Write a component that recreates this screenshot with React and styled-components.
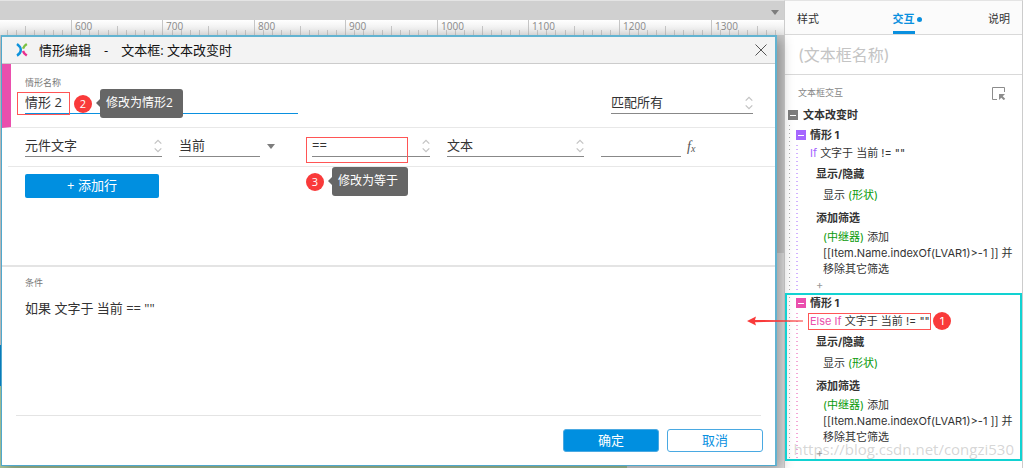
import styled, { createGlobalStyle, css } from 'styled-components';
import { useState } from 'react';

const RULER_START = 600;
const RULER_X = 71;
const RULER_STEP = 91.4;

const Ruler = () => {
    const ticks = [];
    for (let i = -8; i < 220; i++) {
        const x = Math.round(RULER_X + (i * RULER_STEP) / 10);
        if (x < 0) continue;
        const top = i % 10 === 0 ? 0 : i % 5 === 0 ? 6 : 10;
        ticks.push(<rect key={i} x={x} y={top} width="1" height={15 - top} fill="#c6c6c6" />);
    }
    const labels = [];
    for (let i = 0; i < 20; i++) {
        labels.push(
            <text key={i} x={Math.round(RULER_X + i * RULER_STEP) + 4} y="10">{RULER_START + i * 100}</text>
        );
    }
    return <RulerSvg aria-hidden="true">{ticks}{labels}</RulerSvg>;
}

const Logo = () => (
    <svg width="12" height="14" viewBox="0 0 12 14" fill="none" strokeWidth="2.4">
        <path d="M1 1 C3 2.5 4.8 4.8 4.8 7 C4.8 9.2 3.2 11.3 1 12.6" stroke="#0d93dd" />
        <path d="M10.8 1 C9 2.2 7.6 3.8 7 5.6" stroke="#7cc142" />
        <path d="M7 8 C7.6 9.8 9 11.4 10.8 12.6" stroke="#e8308f" />
    </svg>
)

const Updown = () => (
    <Chevrons width="8" height="14" viewBox="0 0 8 14" fill="none" stroke="#c4c4c4" strokeWidth="1.3">
        <path d="M0.7 4.6 L4 1.3 L7.3 4.6 M0.7 9.4 L4 12.7 L7.3 9.4" />
    </Chevrons>
)

const Picker = ({ label, value, width, children }) => (
    <Field $width={width}>
        <Select aria-label={label} defaultValue={value}>
            <option>{value}</option>
        </Select>
        <Updown />
        {children}
    </Field>
)

const CaseItem = ({ color, keyword, selected, children }) => {
    const [open, setOpen] = useState(true);

    return (
        <Case $selected={selected} $color={color}>
            <CaseHead>
                <Toggle $color={color} aria-label="情形 1" onClick={() => setOpen(!open)} />
                情形 1
            </CaseHead>
            {open && <>
                <Condition>
                    <Keyword $color={color}>{keyword}</Keyword> 文字于 当前 != ""
                    {children}
                </Condition>
                <ActionTitle>显示/隐藏</ActionTitle>
                <Action $single>显示 <Target>(形状)</Target></Action>
                <ActionTitle>添加筛选</ActionTitle>
                <Action><Target>(中继器)</Target> 添加 [[Item.Name.indexOf(LVAR1)&gt;-1 ]] 并移除其它筛选</Action>
                <AddAction aria-label="添加动作">+</AddAction>
            </>}
        </Case>
    );
}

const App = () => {
    const [name, setName] = useState('情形 2');

    return (
        <Page>
            <GlobalStyle />
            <Workspace>
                <TabStrip><Caret /></TabStrip>
                <Ruler />
                <Canvas>
                    <Dialog role="dialog" aria-label="情形编辑">
                        <TitleBar>
                            <Logo />
                            <Title>情形编辑<span>-</span>文本框: 文本改变时</Title>
                            <Close aria-label="关闭">
                                <svg width="12" height="12" viewBox="0 0 12 12" stroke="#555" strokeWidth="1">
                                    <path d="M0.5 0.5 L11.5 11.5 M11.5 0.5 L0.5 11.5" />
                                </svg>
                            </Close>
                        </TitleBar>
                        <CaseInfo>
                            <NameBlock>
                                <Label htmlFor="case-name">情形名称</Label>
                                <Field $active>
                                    <Input id="case-name" value={name} onChange={(e) => setName(e.target.value)} />
                                    <NameNote>
                                        <Frame $width={53} $height={23} />
                                        <Badge>2</Badge>
                                        <Tip>修改为情形2</Tip>
                                    </NameNote>
                                </Field>
                            </NameBlock>
                            <Picker label="匹配" value="匹配所有" width={142} />
                        </CaseInfo>
                        <Expression>
                            <Picker label="类型" value="元件文字" width={137} />
                            <WidgetPicker>
                                <Field $width={81}>
                                    <Input aria-label="元件" defaultValue="当前" />
                                </Field>
                                <Caret />
                            </WidgetPicker>
                            <Picker label="运算" value="==" width={118}>
                                <OperatorNote>
                                    <Frame $width={102} $height={26} />
                                    <NoteRow>
                                        <Badge>3</Badge>
                                        <Tip>修改为等于</Tip>
                                    </NoteRow>
                                </OperatorNote>
                            </Picker>
                            <Picker label="值类型" value="文本" width={137} />
                            <ValueGroup>
                                <Field $width={80}>
                                    <Input aria-label="值" />
                                </Field>
                                <Fx aria-label="函数">f<sub>x</sub></Fx>
                            </ValueGroup>
                        </Expression>
                        <Rows>
                            <AddRow>+ 添加行</AddRow>
                        </Rows>
                        <Summary>
                            <Label as="h2">条件</Label>
                            <p>如果 文字于 当前 == ""</p>
                        </Summary>
                        <Footer>
                            <Button $primary>确定</Button>
                            <Button>取消</Button>
                        </Footer>
                    </Dialog>
                </Canvas>
            </Workspace>
            <Inspector>
                <Tabs>
                    <Tab>样式</Tab>
                    <Tab $active>交互</Tab>
                    <Tab>说明</Tab>
                </Tabs>
                <WidgetName aria-label="名称" placeholder="(文本框名称)" />
                <SectionHead>
                    文本框交互
                    <svg width="14" height="13" viewBox="0 0 14 13" fill="none" stroke="#8c8c8c">
                        <path d="M5 12.5 H0.5 V0.5 H12.5 V5" />
                        <path d="M12.5 12.5 L8.5 8.5" strokeWidth="2" />
                        <path d="M7 7 H13 L7 13 Z" fill="#8c8c8c" stroke="none" />
                    </svg>
                </SectionHead>
                <EventHead>
                    <Toggle $color="#7d7d7d" aria-label="文本改变时" />
                    文本改变时
                </EventHead>
                <Tree>
                    <CaseItem color="#a566ff" keyword="If" />
                    <CaseItem color="#ea4fad" keyword="Else If" selected>
                        <ConditionNote>
                            <Arrow width="56" height="10" viewBox="0 0 56 10" fill="#f93a3a">
                                <path d="M0 5 L9 0.5 L8 4 L56 4.5 V5.5 L8 6.2 L9 9.5 Z" />
                            </Arrow>
                            <Frame $width={123} $height={17} />
                            <Badge>1</Badge>
                        </ConditionNote>
                    </CaseItem>
                    <Watermark>https://blog.csdn.net/congzi530</Watermark>
                </Tree>
            </Inspector>
        </Page>
    );
}

export default App;

const GlobalStyle = createGlobalStyle`
* {
    box-sizing: border-box;
}
body {
    margin: 0;
    background: white;
    color: #333;
    font-family: "Open Sans", "Noto Sans CJK SC", sans-serif;
    font-size: 13px;
    line-height: 18px;
}
button, input, select {
    margin: 0;
    padding: 0;
    border: 0;
    border-radius: 0;
    background: none;
    color: inherit;
    font: inherit;
    outline: none;
}
button {
    cursor: pointer;
}
h1, h2, p {
    margin: 0;
    font-weight: normal;
}
`;

const Page = styled.div`
display: flex;
min-height: 100vh;
`;

const Workspace = styled.div`
flex: 1;
display: flex;
flex-direction: column;
min-width: 0;
`;

const TabStrip = styled.div`
height: 20px;
padding: 3px 5px 0 0;
border-top: 1px solid #e4e4e4;
background: #d0d0d0;
display: flex;
align-items: center;
justify-content: flex-end;
`;

const Caret = styled.i`
border: 4px solid transparent;
border-top: 5px solid #7d7d7d;
border-bottom: 0;
`;

const RulerSvg = styled.svg`
display: block;
width: 100%;
height: 15px;
background: linear-gradient(white, #e6e6e6);
font-family: "Open Sans", sans-serif;
font-size: 10px;
fill: #8a8a8a;
`;

const Canvas = styled.div`
flex: 1;
display: flex;
padding: 0 7px 2px 1px;
background:
    linear-gradient(#c9c9c9, #c9c9c9) right top / 7px 218px no-repeat,
    linear-gradient(#dedede, #dedede) right top / 7px 100% no-repeat,
    linear-gradient(#a9c69a, #a9c69a) left bottom / 80% 2px no-repeat,
    linear-gradient(#c4c4c4 0 310px, #0a84c8 310px 351px, #a9c69a 351px) left top / 2px 100% no-repeat,
    #ddd;
`;

const Dialog = styled.section`
position: relative;
flex: 1;
display: flex;
flex-direction: column;
border: 1px solid #4fa8cd;
border-top: 2px solid #62b3d1;
border-right: 2px solid #62b3d1;
background: white;
box-shadow: 4px 4px 12px rgba(0, 0, 0, 0.3);
`;

const TitleBar = styled.header`
height: 27px;
padding: 0 8px 0 14px;
display: flex;
align-items: center;
border-bottom: 1px solid #ccc;
background: #f3f3f3;
`;

const Title = styled.h1`
flex: 1;
margin-left: 11px;
color: #111;
font-size: 13px;
line-height: 20px;

span {
    margin: 0 13px;
}
`;

const Close = styled.button`
display: flex;
`;

const CaseInfo = styled.div`
height: 64px;
padding: 12px 22px 13px 14px;
display: flex;
align-items: flex-end;
justify-content: space-between;
border-left: 9px solid #ea4fad;
border-bottom: 1px solid #e8e8e8;
`;

const NameBlock = styled.div`
flex: 0 1 273px;
`;

const Label = styled.label`
display: block;
color: #777;
font-size: 9px;
line-height: 14px;
`;

const Field = styled.div`
position: relative;
display: flex;
flex: none;
width: ${({ $width }) => ($width ? `${$width}px` : '100%')};
height: 21px;
border-bottom: 1px solid ${({ $active }) => ($active ? '#0a90df' : '#888')};

${NameBlock} & {
    margin-top: 3px;
}
`;

const Input = styled.input`
width: 100%;
height: 18px;
`;

const Select = styled.select`
width: 100%;
height: 18px;
appearance: none;
`;

const Chevrons = styled.svg`
position: absolute;
top: 3px;
right: 0;
pointer-events: none;
`;

const Expression = styled.div`
height: 39px;
margin-left: 6px;
padding: 8px 0 0 17px;
display: flex;
align-items: flex-start;
gap: 17px;
border-bottom: 1px solid #e8e8e8;
`;

const WidgetPicker = styled.div`
width: 116px;
display: flex;
align-items: center;
gap: 7px;
`;

const ValueGroup = styled.div`
display: flex;
gap: 6px;
`;

const Fx = styled.button`
height: 21px;
color: #555;
font-family: "Liberation Serif", serif;
font-size: 14px;
font-style: italic;
line-height: 20px;

sub {
    font-size: 10px;
    line-height: 1px;
    vertical-align: -1px;
}
`;

const Rows = styled.div`
min-height: 100px;
padding: 7px 23px;
border-bottom: 2px solid #e4e4e4;
`;

const AddRow = styled.button`
width: 134px;
height: 24px;
padding-bottom: 2px;
border-radius: 2px;
background: #008fe0;
color: white;
`;

const Summary = styled.div`
flex: 1;
min-height: 148px;
margin: 0 14px;
padding: 9px;
border-bottom: 1px solid #e4e4e4;

p {
    margin-top: 8px;
    line-height: 20px;
}
`;

const Footer = styled.footer`
padding: 13px 12px;
display: flex;
justify-content: flex-end;
gap: 8px;
`;

const Button = styled.button`
width: 96px;
height: 23px;
padding-bottom: 2px;
border: 1px solid #4aa9e2;
border-radius: 3px;
background: white;
color: #0a90df;

${({ $primary }) => $primary && css`
    background: #008fe0;
    color: white;
`}
`;

const Frame = styled.div`
flex: none;
width: ${({ $width }) => $width}px;
height: ${({ $height }) => $height}px;
border: 1px solid #f55;
`;

const Badge = styled.span`
flex: none;
width: 18px;
height: 18px;
border-radius: 50%;
background: #f93a3a;
color: white;
font-size: 11px;
line-height: 18px;
text-align: center;
`;

const Tip = styled.span`
position: relative;
height: 29px;
margin-left: 4px;
padding: 0 10px 0 6px;
border-radius: 3px;
background: #666;
color: white;
font-size: 12px;
line-height: 28px;
white-space: nowrap;

&::before {
    content: "";
    position: absolute;
    top: 10px;
    right: 100%;
    border: 4px solid transparent;
    border-right-color: #666;
    border-left: 0;
}
`;

const Note = styled.div`
position: absolute;
z-index: 1;
display: flex;
align-items: center;
gap: 4px;
pointer-events: none;
`;

const NameNote = styled(Note)`
top: -4px;
left: -8px;
`;

const OperatorNote = styled(Note)`
top: 1px;
left: -6px;
flex-direction: column;
align-items: flex-start;
`;

const NoteRow = styled.div`
display: flex;
align-items: center;
gap: 4px;
`;

const Inspector = styled.aside`
flex: none;
width: 239px;
border: 1px solid #ccc;
border-top-color: #e4e4e4;
border-bottom: 0;
font-family: Inter, "Noto Sans CJK SC", sans-serif;
font-size: 11px;
`;

const Tabs = styled.nav`
height: 34px;
padding: 0 12px;
display: flex;
justify-content: space-between;
border-bottom: 1px solid #d9d9d9;
background: #fbfbfb;
`;

const Tab = styled.button`
position: relative;
padding-top: 5px;
border-bottom: 3px solid transparent;

${({ $active }) => $active && css`
    border-color: #0a90df;
    color: #0a90df;
    font-weight: bold;

    &::after {
        content: "";
        position: absolute;
        top: 16px;
        left: 24px;
        width: 5px;
        height: 5px;
        border-radius: 50%;
        background: #0a90df;
    }
`}
`;

const WidgetName = styled.input`
display: block;
width: 100%;
height: 40px;
padding: 0 13px;
border-bottom: 1px solid #d9d9d9;
font-size: 16px;
line-height: 24px;

&::placeholder {
    color: #c4c4c4;
}
`;

const SectionHead = styled.div`
height: 30px;
padding: 6px 16px 0 13px;
display: flex;
align-items: center;
justify-content: space-between;
color: #888;
font-size: 9px;
`;

const EventHead = styled.div`
height: 20px;
padding-left: 3px;
display: flex;
align-items: center;
gap: 5px;
font-weight: bold;
`;

const Toggle = styled.button`
width: 10px;
height: 10px;
background: linear-gradient(white, white) center / 6px 1px no-repeat ${({ $color }) => $color};
`;

const Tree = styled.div`
position: relative;
background: repeating-linear-gradient(#aaa 0 1px, transparent 1px 4px) 4px 0 / 1px 100% no-repeat;
`;

const Case = styled.div`
padding-left: 23px;
border: 2px solid ${({ $selected }) => ($selected ? '#12d2d2' : 'transparent')};
background: repeating-linear-gradient(${({ $color }) => $color}80 0 1px, transparent 1px 4px) 9px 18px / 2px 100% no-repeat;
`;

const CaseHead = styled.div`
height: 16px;
margin-left: -14px;
display: flex;
align-items: center;
gap: 4px;
font-weight: bold;
`;

const Condition = styled.div`
position: relative;
line-height: 20px;
`;

const ConditionNote = styled(Note)`
top: 1px;
left: -63px;

${Frame} {
    margin-left: 1px;
    margin-right: -2px;
}
`;

const Arrow = styled.svg`
flex: none;
`;

const Keyword = styled.span`
color: ${({ $color }) => $color};
`;

const ActionTitle = styled.div`
padding-left: 6px;
font-weight: bold;
line-height: 22px;
`;

const Action = styled.div`
margin-bottom: 2px;
padding: 0 2px 0 13px;
line-height: ${({ $single }) => ($single ? 20 : 16)}px;
`;

const Target = styled.span`
color: #0a9a0a;
`;

const AddAction = styled.button`
display: block;
height: 12px;
margin-left: 6px;
color: #999;
line-height: 12px;
`;

const Watermark = styled.div`
position: absolute;
right: 8px;
bottom: 2px;
color: rgba(150, 150, 150, 0.4);
font-family: "Open Sans", sans-serif;
font-size: 15px;
line-height: 20px;
pointer-events: none;
`;
